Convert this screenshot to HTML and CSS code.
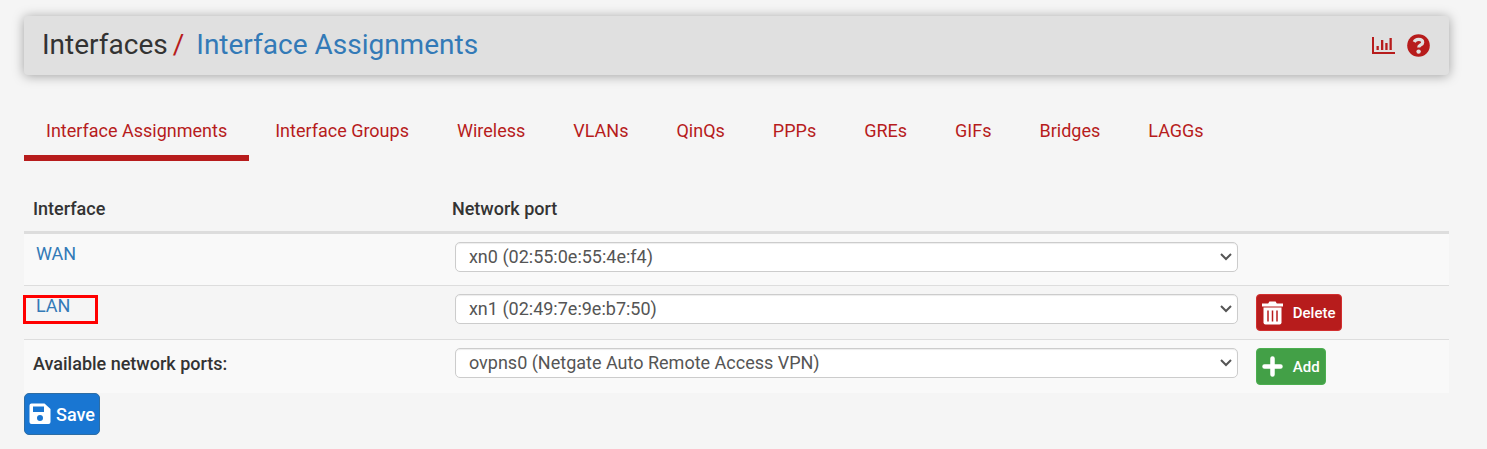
FILE: index.html
```
<!DOCTYPE html>
<html lang="en">
<head>
    <meta charset="utf-8">
    <title>Interfaces: Interface Assignments</title>
    <link rel="stylesheet" href="styles.css">
</head>
<body>
    <header class="page-header">
        <h1>Interfaces<span class="slash">/</span><a href="#">Interface Assignments</a></h1>
        <div class="header-icons">
            <a href="#" aria-label="Status">
                <svg width="23" height="17" viewBox="0 0 23 17" fill="currentColor">
                    <path d="M0 0h2v15h21v2H0z"/>
                    <path d="M4.500 9h2.300v4H4.500zM9 3h2.300v10H9zM13.300 6h2.300v7h-2.300zM17.500 1h2.300v12h-2.300z"/>
                </svg>
            </a>
            <a href="#" aria-label="Help">
                <svg width="23" height="23" viewBox="0 0 23 23">
                    <circle cx="11.5" cy="11.5" r="11.3" fill="currentColor"/>
                    <path d="M7.2 8C8 6.200 9.500 5.400 11.500 5.400c2.400 0 4.200 1.100 4.200 3 0 2.600-4 2.500-4 5" fill="none" stroke="#e0e0e0" stroke-width="3.200"/>
                    <circle cx="11.6" cy="17.6" r="2.2" fill="#e0e0e0"/>
                </svg>
            </a>
        </div>
    </header>

    <nav class="tabs">
        <a href="#" class="active">Interface Assignments</a>
        <a href="#">Interface Groups</a>
        <a href="#">Wireless</a>
        <a href="#">VLANs</a>
        <a href="#">QinQs</a>
        <a href="#">PPPs</a>
        <a href="#">GREs</a>
        <a href="#">GIFs</a>
        <a href="#">Bridges</a>
        <a href="#">LAGGs</a>
    </nav>

    <form>
        <table class="assignments">
            <thead>
                <tr>
                    <th class="col-name">Interface</th>
                    <th class="col-port">Network port</th>
                    <th></th>
                </tr>
            </thead>
            <tbody>
                <tr>
                    <td><a href="#">WAN</a></td>
                    <td>
                        <select aria-label="WAN network port">
                            <option>xn0 (02:55:0e:55:4e:f4)</option>
                        </select>
                    </td>
                    <td></td>
                </tr>
                <tr>
                    <td class="marked"><a href="#">LAN</a></td>
                    <td>
                        <select aria-label="LAN network port">
                            <option>xn1 (02:49:7e:9e:b7:50)</option>
                        </select>
                    </td>
                    <td>
                        <button type="button" class="btn btn-danger">
                            <svg width="21" height="24" viewBox="0 0 21 24">
                                <path d="M0 2.5h6.2L7.4.5h6.2l1.2 2H21v3H0z" fill="#fff"/>
                                <path d="M1.5 6.500h18v15a2 2 0 0 1-2 2h-14a2 2 0 0 1-2-2z" fill="#fff"/>
                                <path d="M6 9.500v11M10.500 9.500v11M15 9.500v11" stroke="#b71c1c" stroke-width="1.500"/>
                            </svg>
                            Delete
                        </button>
                    </td>
                </tr>
                <tr>
                    <th><label for="newport">Available network ports:</label></th>
                    <td>
                        <select id="newport">
                            <option>ovpns0 (Netgate Auto Remote Access VPN)</option>
                        </select>
                    </td>
                    <td>
                        <button type="button" class="btn btn-success">
                            <svg width="21" height="21" viewBox="0 0 21 21">
                                <path d="M10.500 2.500v16M2.500 10.500h16" stroke="#fff" stroke-width="4.500" stroke-linecap="round"/>
                            </svg>
                            Add
                        </button>
                    </td>
                </tr>
            </tbody>
        </table>

        <button type="button" class="btn btn-primary">
            <svg width="22" height="22" viewBox="0 0 22 22">
                <path fill="#fff" fill-rule="evenodd" d="M2.500 0.500h13L21.500 6v13a2 2 0 0 1-2 2h-17a2 2 0 0 1-2-2v-16.500a2 2 0 0 1 2-2zM4 3.500v5.500h11v-5.500zM11 12a3 3 0 1 0 0 6 3 3 0 0 0 0-6z"/>
            </svg>
            Save
        </button>
    </form>
</body>
</html>
```
FILE: styles.css
```
*, *::after {
    box-sizing: border-box;
}
body {
    margin: 0;
    padding: 16px 38px 14px 24px;
    background: #f5f5f5;
    color: #333;
    font-family: Roboto, sans-serif;
    font-size: 18px;
    line-height: 24px;
}
a {
    color: #337ab7;
    text-decoration: none;
}

/* title bar */
.page-header {
    display: flex;
    justify-content: space-between;
    align-items: center;
    padding: 11px 19px 12px 18px;
    background: #e0e0e0;
    border-radius: 4px;
    box-shadow: 0 1px 12px rgba(0, 0, 0, 0.35);
}
.page-header h1 {
    margin: 0;
    font-size: 28px;
    font-weight: 400;
    line-height: 36px;
}
.slash {
    margin: 0 12px 0 5px;
    color: #b71c1c;
}
.header-icons {
    display: flex;
    align-items: center;
    gap: 12px;
}
.header-icons a {
    display: flex;
    color: #b71c1c;
}

/* tabs */
.tabs {
    display: flex;
    gap: 4px;
    margin-top: 33px;
}
.tabs a {
    padding: 11px 22px 12px;
    border-bottom: 6px solid transparent;
    color: #b71c1c;
}
.tabs a.active {
    border-bottom-color: #b71c1c;
}

/* assignments table */
.assignments {
    width: 100%;
    margin-top: 28px;
    border-collapse: separate;
    border-spacing: 0;
    table-layout: fixed;
}
.col-name {
    width: 29.4%;
}
.col-port {
    width: 56.2%;
}
th {
    padding: 8px 9px;
    font-weight: 500;
    text-align: left;
    vertical-align: top;
}
thead th {
    padding-bottom: 10px;
    border-bottom: 3px solid #ddd;
}
td {
    height: 51px;
    padding: 8px 6px 8px 12px;
    vertical-align: top;
}
tbody th {
    padding-top: 12px;
}
tbody tr + tr > * {
    border-top: 1px solid #ddd;
}
tbody tr:nth-child(odd) {
    background: #f9f9f9;
}
.marked {
    position: relative;
}
.marked::after {
    content: "";
    position: absolute;
    top: 9px;
    left: -1px;
    width: 75px;
    height: 29px;
    border: 3px solid #f00;
    pointer-events: none;
}
select {
    display: block;
    width: 100%;
    height: 30px;
    padding: 0 24px 1px 13px;
    border: 1px solid #ccc;
    border-radius: 5px;
    background: #fff url("data:image/svg+xml,%3Csvg xmlns='http://www.w3.org/2000/svg' width='12' height='8'%3E%3Cpath d='M1 1l5 5 5-5' fill='none' stroke='%23555' stroke-width='2'/%3E%3C/svg%3E") no-repeat right 5px center;
    box-shadow: inset 0 1px 1px rgba(0, 0, 0, 0.075);
    color: #555;
    font: inherit;
    appearance: none;
}

/* buttons */
.btn {
    display: flex;
    align-items: center;
    gap: 10px;
    height: 37px;
    padding: 0 5px;
    border: 1px solid;
    border-radius: 4px;
    color: #fff;
    font-family: inherit;
    font-size: 15px;
    font-weight: 500;
}
.btn-danger {
    background: #b71c1c;
    border-color: #d32f2f;
}
.btn-success {
    background: #43a047;
    border-color: #4caf50;
}
.btn-primary {
    gap: 5px;
    height: 42px;
    padding: 0 4px;
    background: #1976d2;
    border-color: #2e6da4;
    border-radius: 5px;
    font-size: 18px;
}
```
